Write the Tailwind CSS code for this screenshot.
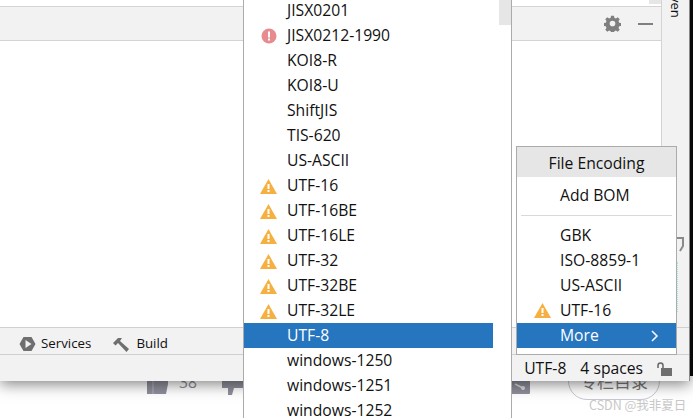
<!DOCTYPE html>
<html lang="en">
  <head>
    <meta charset="UTF-8" />
    <title>File Encoding</title>
    <script src="https://cdn.jsdelivr.net/npm/@tailwindcss/browser@4"></script>
  </head>
  <body class="bg-white">
    <div class="relative w-[693px] h-[418px] overflow-hidden bg-white font-['Open_Sans',sans-serif] text-[15.7px] text-[#111]">
      <!-- page behind the IDE -->
      <div class="absolute left-[690px] top-0 w-[3px] h-[376px] bg-[#0c0c0c]"></div>
      <div class="absolute left-[147px] top-[381px] flex items-center gap-[10px] text-[#8a8a94]">
        <svg width="22" height="13" viewBox="0 0 22 13"><path d="M0 0h21v3l-2 10H0z" fill="#8f8f9c"/><path d="M6 0v13" stroke="#b4b4be"/></svg>
        <span class="-mt-[10px]">38</span>
      </div>
      <svg class="absolute left-[222px] top-[381px]" width="22" height="14" viewBox="0 0 22 14"><path d="M0 0h22v7h-10l-2 7H6V7H0z" fill="#8f8f9c"/></svg>
      <svg class="absolute left-[512px] top-[381px]" width="18" height="13" viewBox="0 0 18 13"><path d="M0 0h18v12q0 1-1 1H0z" fill="#8f8f9c"/><path d="M3 3l8 4" stroke="#ddd" stroke-width="1.500" fill="none"/><circle cx="11" cy="7" r="2" fill="#ddd"/></svg>
      <div class="absolute left-[568px] top-[362px] w-[92px] h-[38px] rounded-full border border-[#c8c8d4] flex items-center justify-center text-[#777] text-[17px] font-['Noto_Sans_CJK_SC',sans-serif]">专栏目录</div>
      <div class="absolute left-[589px] top-[397px] text-[12.5px] leading-[16px] text-[#c8c8c8] font-['Noto_Sans_CJK_SC',sans-serif]">CSDN @我非夏日</div>

      <!-- IDE window -->
      <div class="absolute left-0 top-0 w-[690px] h-[381px] bg-[#f2f2f2] flex flex-col border-r border-[#8a8a8a] shadow-[0_3px_14px_rgba(0,0,0,0.5)]">
        <div class="flex h-[327px]">
          <div class="flex-1 flex flex-col bg-white">
            <div class="h-[7px] bg-white border-b border-[#d4d4d4] flex justify-end">
              <div class="w-[12px] h-[4px] bg-[#e6e6e6]"></div>
            </div>
            <div class="h-[34px] bg-[#f2f2f2] border-b border-[#d4d4d4] flex items-center justify-end gap-[17px] pr-[8px]">
              <svg width="17" height="17" viewBox="0 0 24 24"><path fill="#7f7f7f" fill-rule="evenodd" d="M10 1h4l.6 3 2.200.9 2.600-1.700 2.800 2.800-1.700 2.600.9 2.200 3 .6v4l-3 .6-.9 2.200 1.700 2.600-2.800 2.800-2.600-1.700-2.200.9-.6 3h-4l-.6-3-2.200-.9-2.600 1.700-2.800-2.800 1.700-2.600-.9-2.200-3-.6v-4l3-.6.9-2.200-1.700-2.600 2.800-2.800 2.600 1.700 2.200-.9zM12 8a4 4 0 1 0 0 8 4 4 0 0 0 0-8z"/></svg>
              <div class="w-[15px] h-[2px] bg-[#7f7f7f]"></div>
            </div>
          </div>
          <div class="w-[28px] bg-[#f2f2f2] border-l border-[#d4d4d4] text-[13px] leading-none overflow-hidden relative">
            <div class="[writing-mode:vertical-rl] ml-[7px] -mt-[23px]">Maven</div>
            <svg class="absolute left-[15px] top-[236px]" width="7" height="17" viewBox="0 0 7 17"><path d="M0 2h6v8l-3 5" stroke="#8a8a8a" stroke-width="2" fill="none"/></svg>
            <div class="absolute left-[15px] top-[262px] h-[50px] border-l border-dotted border-[#a8e4ec]"></div>
          </div>
        </div>
        <div class="h-[28px] border-y border-[#d0d0d0] flex items-center pt-[6px] pl-[19px] text-[13.3px]">
          <svg width="17" height="14" viewBox="0 0 17 14"><path fill="#6f6f6f" fill-rule="evenodd" d="M4.500 0h8l4 7-4 7h-8l-4-7zM6.500 3v8l6-4z"/></svg>
          <span class="ml-[5px] mr-[22px]">Services</span>
          <svg width="18" height="15" viewBox="0 0 18 15"><path fill="#6f6f6f" d="M0 6l5-5h4l-2 3 9 8-2.500 3-8.500-9-2.500 2.500z"/></svg>
          <span class="ml-[5px]">Build</span>
        </div>
        <div class="h-[26px] flex items-center justify-end pr-[17px] pt-[2px]">
          <span>UTF-8</span>
          <span class="ml-[14px] mr-px">4 spaces</span>
          <svg class="ml-[13px]" width="15" height="14" viewBox="0 0 15 14"><path d="M1 6V3.500a2.500 2.500 0 0 1 5 0V6" stroke="#666" stroke-width="1.500" fill="none"/><rect x="4" y="6" width="11" height="8" fill="#6f6f6f"/></svg>
        </div>
      </div>

      <!-- full charset list -->
      <div class="absolute left-[243px] -top-[2px] w-[269px] h-[430px] bg-white border-x border-[#ababab]">
        <div class="absolute right-0 top-0 w-[12px] h-[27px] bg-[#e6e6e6]"></div>
        <div class="w-[249px] flex flex-col">
          <div class="h-[25px] flex items-center pl-[43px] pt-px">JISX0201</div>
          <div class="h-[25px] flex items-center relative pl-[43px] pt-px">
            <svg class="absolute left-[17px]" width="16" height="16" viewBox="0 0 16 16"><circle cx="8" cy="8" r="7.500" fill="#e88b8f"/><rect x="7" y="3.500" width="2" height="6" fill="#fff"/><rect x="7" y="10.500" width="2" height="2" fill="#fff"/></svg>
            JISX0212-1990
          </div>
          <div class="h-[25px] flex items-center pl-[43px] pt-px">KOI8-R</div>
          <div class="h-[25px] flex items-center pl-[43px] pt-px">KOI8-U</div>
          <div class="h-[25px] flex items-center pl-[43px] pt-px">ShiftJIS</div>
          <div class="h-[25px] flex items-center pl-[43px] pt-px">TIS-620</div>
          <div class="h-[25px] flex items-center pl-[43px] pt-px">US-ASCII</div>
          <div class="h-[25px] flex items-center relative pl-[43px] pt-px">
            <svg class="absolute left-[16px]" width="17" height="15" viewBox="0 0 17 15"><path d="M8.500 0L17 15H0z" fill="#f5b041"/><rect x="7.500" y="5" width="2" height="5" fill="#fff"/><rect x="7.500" y="11" width="2" height="2" fill="#fff"/></svg>
            UTF-16
          </div>
          <div class="h-[25px] flex items-center relative pl-[43px] pt-px">
            <svg class="absolute left-[16px]" width="17" height="15" viewBox="0 0 17 15"><path d="M8.500 0L17 15H0z" fill="#f5b041"/><rect x="7.500" y="5" width="2" height="5" fill="#fff"/><rect x="7.500" y="11" width="2" height="2" fill="#fff"/></svg>
            UTF-16BE
          </div>
          <div class="h-[25px] flex items-center relative pl-[43px] pt-px">
            <svg class="absolute left-[16px]" width="17" height="15" viewBox="0 0 17 15"><path d="M8.500 0L17 15H0z" fill="#f5b041"/><rect x="7.500" y="5" width="2" height="5" fill="#fff"/><rect x="7.500" y="11" width="2" height="2" fill="#fff"/></svg>
            UTF-16LE
          </div>
          <div class="h-[25px] flex items-center relative pl-[43px] pt-px">
            <svg class="absolute left-[16px]" width="17" height="15" viewBox="0 0 17 15"><path d="M8.500 0L17 15H0z" fill="#f5b041"/><rect x="7.500" y="5" width="2" height="5" fill="#fff"/><rect x="7.500" y="11" width="2" height="2" fill="#fff"/></svg>
            UTF-32
          </div>
          <div class="h-[25px] flex items-center relative pl-[43px] pt-px">
            <svg class="absolute left-[16px]" width="17" height="15" viewBox="0 0 17 15"><path d="M8.500 0L17 15H0z" fill="#f5b041"/><rect x="7.500" y="5" width="2" height="5" fill="#fff"/><rect x="7.500" y="11" width="2" height="2" fill="#fff"/></svg>
            UTF-32BE
          </div>
          <div class="h-[25px] flex items-center relative pl-[43px] pt-px">
            <svg class="absolute left-[16px]" width="17" height="15" viewBox="0 0 17 15"><path d="M8.500 0L17 15H0z" fill="#f5b041"/><rect x="7.500" y="5" width="2" height="5" fill="#fff"/><rect x="7.500" y="11" width="2" height="2" fill="#fff"/></svg>
            UTF-32LE
          </div>
          <div class="h-[25px] flex items-center pl-[43px] pt-px bg-[#2675bf] text-white">UTF-8</div>
          <div class="h-[25px] flex items-center pl-[43px] pt-px">windows-1250</div>
          <div class="h-[25px] flex items-center pl-[43px] pt-px">windows-1251</div>
          <div class="h-[25px] flex items-center pl-[43px] pt-px">windows-1252</div>
        </div>
      </div>

      <!-- file encoding popup -->
      <div class="absolute left-[516px] top-[146px] w-[161px] h-[209px] bg-white border border-[#ababab]">
        <div class="h-[30px] bg-[#e6e6e6] flex items-center justify-center pt-[4px]">File Encoding</div>
        <div class="h-[34px] flex items-center pl-[43px] pt-[3px]">Add BOM</div>
        <div class="mx-[4px] mt-[4px] h-px bg-[#d9d9d9]"></div>
        <div class="mt-[7px] h-[25px] flex items-center pl-[43px]">GBK</div>
        <div class="h-[25px] flex items-center pl-[43px]">ISO-8859-1</div>
        <div class="h-[25px] flex items-center pl-[43px]">US-ASCII</div>
        <div class="h-[25px] flex items-center relative pl-[43px]">
          <svg class="absolute left-[17px]" width="17" height="15" viewBox="0 0 17 15"><path d="M8.500 0L17 15H0z" fill="#f5b041"/><rect x="7.500" y="5" width="2" height="5" fill="#fff"/><rect x="7.500" y="11" width="2" height="2" fill="#fff"/></svg>
          UTF-16
        </div>
        <div class="h-[25px] flex items-center justify-between pl-[43px] pr-[17px] bg-[#2675bf] text-white">
          More
          <svg width="8" height="12" viewBox="0 0 8 12"><path d="M1 1l5 5-5 5" stroke="#fff" stroke-width="1.500" fill="none"/></svg>
        </div>
      </div>
    </div>
  </body>
</html>
